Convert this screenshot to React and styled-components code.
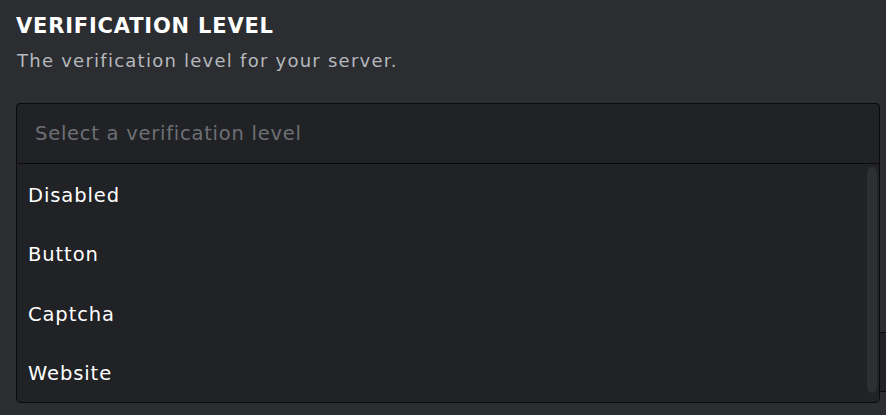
import React from "react";
import styled, { createGlobalStyle } from "styled-components";

const Global = createGlobalStyle`
  html, body { margin: 0; padding: 0; background: #2b2d31; overflow: hidden; }
  body { font-family: "DejaVu Sans", "Noto Sans", sans-serif; }
  * { box-sizing: border-box; }
`;

const Page = styled.div`
  width: 886px;
  height: 415px;
  padding: 11px 0 0 16px;
  display: flex;
  flex-direction: column;
  overflow: hidden;
`;

const Title = styled.h2`
  margin: 0;
  font-size: 21px;
  line-height: 30px;
  font-weight: 700;
  color: #ffffff;
  letter-spacing: 0.8px;
`;

const Desc = styled.p`
  margin: 7px 0 0 1px;
  font-size: 18px;
  line-height: 26px;
  color: #b5b8bc;
  letter-spacing: 1.25px;
`;

const Field = styled.div`
  position: relative;
  margin-top: 29px;
  width: 864px;
`;

const Control = styled.div`
  height: 61px;
  background: #212225;
  border: 1px solid #0b0b0c;
  border-radius: 4px 4px 0 0;
  display: flex;
  align-items: center;
  padding: 0 0 0 18px;
  font-size: 19.5px;
  letter-spacing: 0.75px;
  color: #6d7075;
`;

const Menu = styled.div`
  position: absolute;
  top: 61px;
  left: 0;
  right: 0;
  background: #212225;
  border: 1px solid #0b0b0c;
  border-top: none;
  border-radius: 0 0 5px 5px;
  z-index: 2;
`;

const Option = styled.div`
  height: 59.5px;
  display: flex;
  align-items: center;
  padding: 3px 0 0 11px;
  font-size: 19.5px;
  letter-spacing: 0.9px;
  color: #ffffff;
`;

const Scroll = styled.div`
  position: absolute;
  top: 3px;
  bottom: 9px;
  right: 2px;
  width: 10px;
  border-radius: 5px;
  background: #2d2f33;
`;

const NextField = styled.div`
  margin-top: 168px;
  width: 1000px;
  height: 60px;
  border: 1px solid #0b0b0c;
  border-radius: 4px;
  background: #212225;
`;

const options = ["Disabled", "Button", "Captcha", "Website"];

export default function App() {
  return (
    <>
      <Global />
      <Page>
        <Title>VERIFICATION LEVEL</Title>
        <Desc>The verification level for your server.</Desc>
        <Field>
          <Control>Select a verification level</Control>
          <Menu>
            {options.map((o) => (
              <Option key={o}>{o}</Option>
            ))}
            <Scroll />
          </Menu>
        </Field>
        <NextField />
      </Page>
    </>
  );
}
